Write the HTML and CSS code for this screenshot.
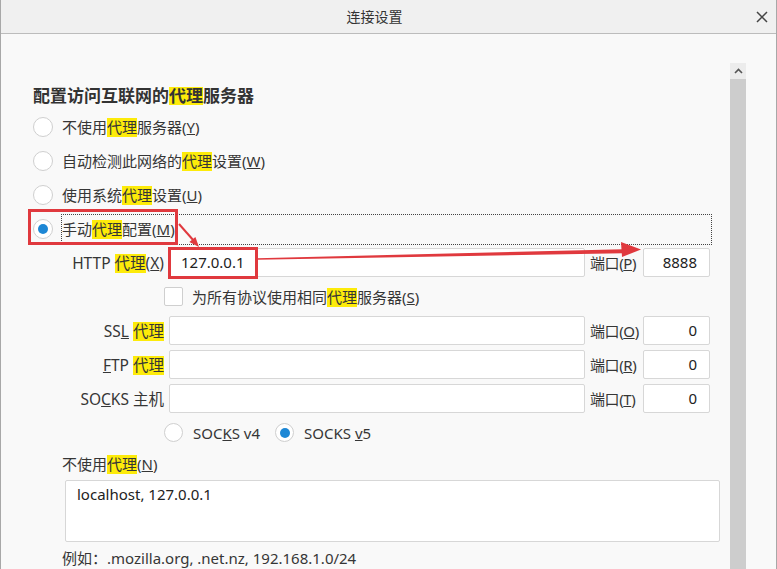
FILE: index.html
```html
<!DOCTYPE html>
<html lang="zh-CN">
<head>
<meta charset="utf-8">
<title>连接设置</title>
<link rel="stylesheet" href="styles.css">
</head>
<body>
<div class="window">
  <div class="titlebar">
    <span></span>
    <span class="title">连接设置</span>
    <span class="close"><svg width="12" height="12" viewBox="0 0 12 12"><path d="M1 1L11 11M11 1L1 11" stroke="#444" stroke-width="1.5" fill="none"/></svg></span>
  </div>
  <div class="body">
    <div class="main">
      <h1 class="heading">配置访问互联网的<span class="hl hl-h">代理</span>服务器</h1>
      <div class="options">
        <div class="opt"><span class="radio"></span><span class="lbl">不使用<span class="hl">代理</span>服务器(<u>Y</u>)</span></div>
        <div class="opt"><span class="radio"></span><span class="lbl">自动检测此网络的<span class="hl">代理</span>设置(<u>W</u>)</span></div>
        <div class="opt"><span class="radio"></span><span class="lbl">使用系统<span class="hl">代理</span>设置(<u>U</u>)</span></div>
        <div class="opt"><span class="radio checked"></span><span class="lbl focus">手动<span class="hl">代理</span>配置(<u>M</u>)</span></div>
      </div>
      <div class="manual">
        <div class="hosts">
          <span class="hlabel">HTTP <span class="hl">代理</span>(<u>X</u>)</span>
          <div class="field">127.0.0.1</div>
          <span class="plabel">端口(<u>P</u>)</span>
          <div class="field port">8888</div>

          <div class="check-row"><span class="checkbox"></span><span>为所有协议使用相同<span class="hl">代理</span>服务器(<u>S</u>)</span></div>

          <span class="hlabel">SS<u>L</u> <span class="hl">代理</span></span>
          <div class="field"></div>
          <span class="plabel">端口(<u>O</u>)</span>
          <div class="field port">0</div>

          <span class="hlabel"><u>F</u>TP <span class="hl">代理</span></span>
          <div class="field"></div>
          <span class="plabel">端口(<u>R</u>)</span>
          <div class="field port">0</div>

          <span class="hlabel">SO<u>C</u>KS 主机</span>
          <div class="field"></div>
          <span class="plabel">端口(<u>T</u>)</span>
          <div class="field port">0</div>
        </div>
        <div class="socks-ver">
          <span class="ver"><span class="radio small"></span><span>SOC<u>K</u>S v4</span></span>
          <span class="ver ver2"><span class="radio small checked"></span><span>SOCKS <u>v</u>5</span></span>
        </div>
        <div class="noproxy-label">不使用<span class="hl">代理</span>(<u>N</u>)</div>
        <div class="noproxy">localhost, 127.0.0.1</div>
        <div class="example">例如：.mozilla.org, .net.nz, 192.168.1.0/24</div>
      </div>
    </div>
    <div class="scrollbar">
      <div class="sb-up"><svg width="9" height="6" viewBox="0 0 9 6"><path d="M1 5L4.5 1.5L8 5" stroke="#555" stroke-width="1.6" fill="none"/></svg></div>
      <div class="sb-track"></div>
    </div>
  </div>
</div>
<svg class="annot" width="777" height="569" viewBox="0 0 777 569">
  <rect x="29.5" y="210.5" width="147" height="33" fill="none" stroke="#e0393e" stroke-width="3"/>
  <rect x="169.5" y="248.5" width="87" height="29" fill="none" stroke="#e0393e" stroke-width="3"/>
  <line x1="179" y1="224" x2="194" y2="241" stroke="#e0393e" stroke-width="2"/>
  <polygon points="199,247 189.4,242.1 195.4,236.9" fill="#e0393e"/>
  <polygon points="257,258.2 623,249.2 623,253.2 257,259.8" fill="#e0393e"/>
  <polygon points="641,249.5 621,242 622,257" fill="#e0393e"/>
</svg>
</body>
</html>
```
FILE: styles.css
```css
html, body {
  margin: 0;
  padding: 0;
}
body {
  position: relative;
  width: 777px;
  height: 569px;
  overflow: hidden;
  font-family: "Noto Sans", "Noto Sans CJK SC", sans-serif;
  font-size: 15px;
  color: #363636;
  background: #f9f9f9;
}
.window {
  width: 777px;
  height: 569px;
  box-sizing: border-box;
  border-left: 1px solid #a8a8a8;
  border-right: 1px solid #a8a8a8;
  background: #f9f9f9;
  display: flex;
  flex-direction: column;
  overflow: hidden;
}
.titlebar {
  height: 33px;
  flex: none;
  border-bottom: 1px solid #bcbcbc;
  background: #f0f0f0;
  display: grid;
  grid-template-columns: 1fr auto 1fr;
  align-items: center;
}
.title {
  font-family: "Noto Sans CJK SC", sans-serif;
  font-size: 14px;
  color: #333;
  padding-right: 28px;
  margin-top: -2px;
}
.close {
  justify-self: end;
  margin-right: 8px;
  display: flex;
  padding-top: 1px;
}
.body {
  flex: 1;
  display: flex;
  min-height: 0;
}
.main {
  width: 729px;
  flex: none;
  box-sizing: border-box;
  padding: 50px 19px 0 32px;
}
.scrollbar {
  width: 16px;
  flex: none;
  margin-top: 29px;
  display: flex;
  flex-direction: column;
}
.sb-up {
  height: 16px;
  background: #ececec;
  display: flex;
  align-items: center;
  justify-content: center;
}
.sb-track {
  flex: 1;
  background: #cdcdcd;
}
.heading {
  margin: 0;
  font-size: 17px;
  font-weight: bold;
  line-height: 24px;
  color: #333;
}
.hl {
  background: #fdeb0a;
  display: inline-block;
  line-height: 19px;
}
.hl-h {
  line-height: 18px;
}
.options {
  margin-top: 2px;
}
.opt {
  height: 34px;
  display: flex;
  align-items: center;
  gap: 9px;
}
.radio {
  width: 20px;
  height: 20px;
  flex: none;
  box-sizing: border-box;
  border: 1px solid #cfcfcf;
  border-radius: 50%;
  background: #fff;
  display: flex;
  align-items: center;
  justify-content: center;
}
.radio.small {
  width: 19px;
  height: 19px;
}
.radio.checked::after {
  content: "";
  width: 10px;
  height: 10px;
  border-radius: 50%;
  background: #1d87d5;
}
.lbl {
  line-height: 29px;
}
.focus {
  flex: 1;
  outline: 1px dotted #444;
}
.manual {
  margin-top: 2px;
  padding-left: 29px;
}
.hosts {
  display: grid;
  grid-template-columns: 102px 1fr 48px 67px;
  grid-auto-rows: 29px;
  gap: 5px;
  align-items: center;
  margin-right: 1px;
}
.hlabel {
  justify-self: end;
  white-space: nowrap;
  font-size: 15.5px;
}
.plabel {
  white-space: nowrap;
  letter-spacing: -0.4px;
}
.field {
  height: 29px;
  box-sizing: border-box;
  border: 1px solid #d7d7d7;
  border-radius: 2px;
  background: #fff;
  padding: 0 11px;
  line-height: 27px;
  color: #222;
}
.port {
  text-align: right;
  padding-right: 12px;
}
.check-row {
  grid-column: 1 / -1;
  padding-left: 102px;
  display: flex;
  align-items: center;
  gap: 9px;
}
.checkbox {
  width: 19px;
  height: 19px;
  box-sizing: border-box;
  border: 1px solid #cfcfcf;
  border-radius: 2px;
  background: #fff;
  flex: none;
}
.socks-ver {
  margin-top: 5px;
  height: 29px;
  padding-left: 102px;
  display: flex;
  align-items: center;
}
.ver {
  display: flex;
  align-items: center;
  gap: 10px;
}
.ver2 {
  margin-left: 15px;
}
.noproxy-label {
  margin-top: 5px;
  line-height: 24px;
}
.noproxy {
  margin-top: 4px;
  margin-left: 3px;
  width: 655px;
  height: 62px;
  box-sizing: border-box;
  border: 1px solid #d7d7d7;
  border-radius: 2px;
  background: #fff;
  padding: 1px 11px;
  line-height: 24px;
  color: #222;
}
.example {
  margin-top: 4px;
  line-height: 24px;
}
.annot {
  position: absolute;
  top: 0;
  left: 0;
  pointer-events: none;
}
```
